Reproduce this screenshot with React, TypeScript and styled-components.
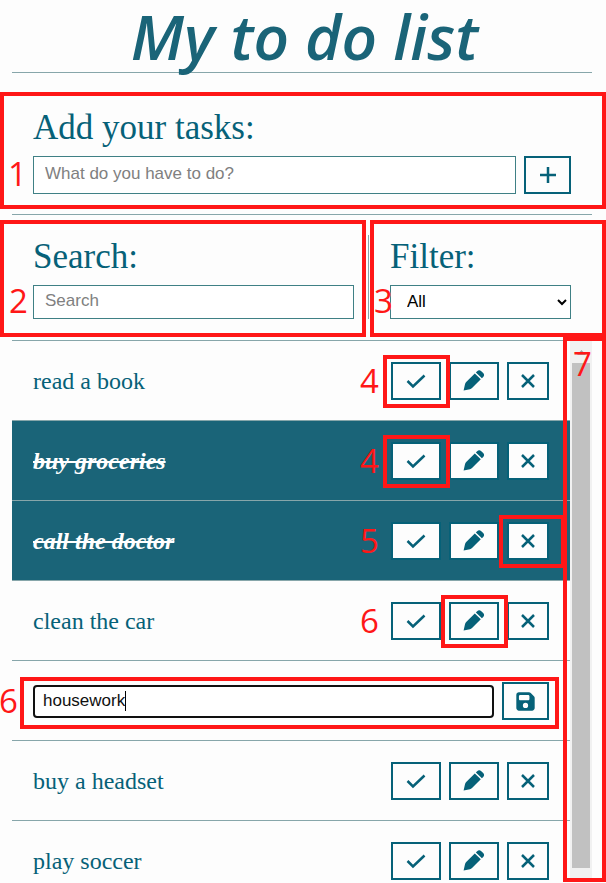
import React, { useState } from "react";
import styled, { createGlobalStyle, css } from "styled-components";
import { FaFloppyDisk } from "react-icons/fa6";

const teal = "#066178";
const fill = "#1a6478";
const line = "#87a6aa";
const paper = "#fdfdfd";
const red = "#ff1717";
const sans = `"Liberation Sans", Arial, sans-serif`;

const GlobalStyle = createGlobalStyle`
  *, *::before, *::after { box-sizing: border-box; }
  html, body { margin: 0; background: ${paper}; }
  body { font-family: "Liberation Serif", Lora, serif; color: ${teal}; }
  button, input, select { font-family: ${sans}; font-size: 17px; }
`;

const Page = styled.main`
  display: flex;
  flex-direction: column;
  height: 100vh;
  padding: 0 14px 0 12px;
  overflow: hidden;
`;

const Header = styled.header`
  flex: none;
  height: 73px;
  border-bottom: 1px solid ${line};
`;

const Title = styled.h1`
  margin: 0;
  padding: 0 0 0 5px;
  font: italic 600 62px/72px "Open Sans", "Noto Sans", sans-serif;
  text-align: center;
  color: ${fill};
`;

const AddForm = styled.form`
  position: relative;
  flex: none;
  padding: 33px 21px 20px;
  border-bottom: 1px solid ${line};
`;

const Tools = styled.section`
  display: grid;
  grid-template-columns: 1fr 203px;
  flex: none;
  gap: 14px;
  padding: 20px 21px 21px;
  border-bottom: 1px solid ${line};
`;

const Tool = styled.div<{ $divided?: boolean }>`
  position: relative;
  min-width: 0;
  ${(p) => p.$divided && css`
    padding-left: 21px;
    border-left: 1px solid ${line};
  `}
`;

const Heading = styled.label`
  display: block;
  margin-bottom: 6px;
  font-size: 35px;
  line-height: 44px;
  color: ${teal};
`;

const Line = styled.div`
  display: flex;
  align-items: center;
  gap: 8px;
`;

const TextBox = styled.input<{ $tall?: boolean }>`
  display: block;
  width: 100%;
  min-width: 0;
  height: ${(p) => (p.$tall ? 38 : 34)}px;
  padding: 0 11px 2px;
  border: 1px solid #3f8085;
  background: #fff;
  outline: none;
  &::placeholder { color: #808080; opacity: 1; }
`;

const Select = styled.select`
  display: block;
  width: 100%;
  height: 34px;
  padding: 0 0 2px 12px;
  border: 1px solid #3f8085;
  border-radius: 0;
  background: #fff;
  color: #000;
`;

const IconButton = styled.button<{ $size?: "wide" | "medium" | "narrow" }>`
  display: flex;
  flex: none;
  align-items: center;
  justify-content: center;
  width: ${(p) => ({ wide: 50, medium: 47, narrow: 42 })[p.$size ?? "wide"]}px;
  height: 38px;
  padding: 0;
  border: 2px solid ${teal};
  background: ${paper};
  color: ${teal};
  font-size: 21px;
`;

const Glyph = styled.svg`
  display: block;
  width: 22px;
  height: 22px;
  fill: none;
  stroke: currentColor;
  stroke-width: 2.5;
`;

const ListArea = styled.section`
  position: relative;
  display: grid;
  grid-template-columns: 1fr 22px;
  grid-template-rows: minmax(0, 1fr);
  flex: 1;
  min-height: 0;
  margin-bottom: 2px;
`;

const List = styled.ul`
  margin: 0;
  padding: 0;
  list-style: none;
`;

const Row = styled.li<{ $done?: boolean }>`
  position: relative;
  display: flex;
  align-items: center;
  gap: 8px;
  padding: 21px 21px 20px;
  border-bottom: 1px solid ${line};
  ${(p) => p.$done && css`background: ${fill};`}
`;

const TaskName = styled.span<{ $done?: boolean }>`
  flex: 1;
  font-size: 24px;
  line-height: 38px;
  ${(p) => p.$done && css`
    color: #fff;
    font-style: italic;
    font-weight: 700;
    text-decoration: line-through;
  `}
`;

const EditField = styled.div`
  position: relative;
  flex: 1;
`;

const EditBox = styled(TextBox)`
  height: 33px;
  padding: 0 8px;
  border: 2px solid #101010;
  border-radius: 4px;
  color: #101010;
`;

const Caret = styled.span`
  position: absolute;
  top: 6px;
  left: 92px;
  width: 1px;
  height: 20px;
  background: #000;
`;

const ScrollTrack = styled.div`
  display: flex;
  flex-direction: column;
  align-items: center;
  min-height: 0;
  padding-bottom: 13px;
  background: #f1f1f1;
`;

const ScrollArrow = styled.svg`
  flex: none;
  width: 17px;
  height: 22px;
`;

const ScrollThumb = styled.div`
  flex: 1;
  width: 18px;
  background: #c1c1c1;
`;

const Frame = styled.div<{ $inset: string }>`
  position: absolute;
  z-index: 2;
  inset: ${(p) => p.$inset};
  border: 4px solid ${red};
  pointer-events: none;
`;

const ButtonSlot = styled.div`
  position: relative;
  flex: none;
`;

const Mark = styled.span<{ $left: number; $top: number }>`
  position: absolute;
  z-index: 3;
  left: ${(p) => p.$left}px;
  top: ${(p) => p.$top}px;
  color: ${red};
  font: 400 33px/38px "Open Sans", sans-serif;
  pointer-events: none;
`;

const CheckIcon = () => (
  <Glyph viewBox="0 0 22 22"><path d="M2.500 11L8 16.500L19.500 5.500" /></Glyph>
);

const CrossIcon = () => (
  <Glyph viewBox="0 0 22 22"><path d="M5 5L17 17M17 5L5 17" /></Glyph>
);

const PlusIcon = () => (
  <Glyph viewBox="0 0 22 22"><path d="M11 3V19M3 11H19" /></Glyph>
);

const PencilIcon = () => (
  <Glyph viewBox="0 0 22 22">
    <path
      fill="currentColor"
      stroke="none"
      d="M.6 20.600L2 14.200Q2.300 13 3.200 12.100L11.800 3.500L17.800 9.300L9 18Q8.100 18.900 6.900 19.300ZM12.900 2.400L14.100 1.200Q16.200-.6 18.300 1.200L20.200 3.100Q22 5.100 20.200 7L18.900 8.200Z"
    />
  </Glyph>
);

type Action = "check" | "edit" | "remove";
type Task = {
  name: string;
  done?: boolean;
  editing?: boolean;
  framed?: Action;
  mark?: string;
};

const tasks: Task[] = [
  { name: "read a book", framed: "check", mark: "4" },
  { name: "buy groceries", done: true, framed: "check", mark: "4" },
  { name: "call the doctor", done: true, framed: "remove", mark: "5" },
  { name: "clean the car", framed: "edit", mark: "6" },
  { name: "housework", editing: true, mark: "6" },
  { name: "buy a headset" },
  { name: "play soccer" },
];

const actions = [
  { id: "check", label: "Complete", Icon: CheckIcon, size: "wide" },
  { id: "edit", label: "Edit", Icon: PencilIcon, size: "wide" },
  { id: "remove", label: "Delete", Icon: CrossIcon, size: "narrow" },
] as const;

function TaskRow({ task }: { task: Task }) {
  const [name, setName] = useState(task.name);
  if (task.editing) {
    return (
      <Row>
        <EditField>
          <EditBox aria-label="Edit task" value={name} onChange={(e) => setName(e.target.value)} />
          <Caret aria-hidden="true" />
        </EditField>
        <IconButton type="button" $size="medium" aria-label="Save"><FaFloppyDisk /></IconButton>
        <Frame $inset="16px 11px 11px 8px" />
        <Mark $left={-13} $top={21}>{task.mark}</Mark>
      </Row>
    );
  }
  return (
    <Row $done={task.done}>
      <TaskName $done={task.done}>{task.name}</TaskName>
      {actions.map(({ id, label, Icon, size }) => (
        <ButtonSlot key={id}>
          <IconButton type="button" $size={size} aria-label={`${label} ${task.name}`}><Icon /></IconButton>
          {task.framed === id && <Frame $inset={id === "remove" ? "-7px -16px -8px -8px" : "-7px -9px -8px -8px"} />}
          {id === "check" && task.mark && <Mark $left={-31} $top={0}>{task.mark}</Mark>}
        </ButtonSlot>
      ))}
    </Row>
  );
}

export default function App() {
  const [draft, setDraft] = useState("");
  const [query, setQuery] = useState("");
  return (
    <>
      <GlobalStyle />
      <Page>
        <Header><Title>My to do list</Title></Header>
        <AddForm onSubmit={(e) => e.preventDefault()}>
          <Heading htmlFor="new-task">Add your tasks:</Heading>
          <Line>
            <TextBox id="new-task" $tall placeholder="What do you have to do?" value={draft} onChange={(e) => setDraft(e.target.value)} />
            <IconButton type="submit" $size="medium" aria-label="Add task"><PlusIcon /></IconButton>
          </Line>
          <Frame $inset="19px -14px 5px -12px" />
          <Mark $left={-4} $top={82}>1</Mark>
        </AddForm>
        <Tools>
          <Tool>
            <Heading htmlFor="search">Search:</Heading>
            <TextBox id="search" placeholder="Search" value={query} onChange={(e) => setQuery(e.target.value)} />
            <Frame $inset="-15px -12px -18px -33px" />
            <Mark $left={-24} $top={47}>2</Mark>
          </Tool>
          <Tool $divided>
            <Heading htmlFor="filter">Filter:</Heading>
            <Select id="filter" defaultValue="All">
              <option>All</option>
              <option>Done</option>
              <option>To do</option>
            </Select>
            <Frame $inset="-15px -35px -18px 1px" />
            <Mark $left={5} $top={47}>3</Mark>
          </Tool>
        </Tools>
        <ListArea>
          <List>
            {tasks.map((task) => <TaskRow key={task.name} task={task} />)}
          </List>
          <ScrollTrack aria-hidden="true">
            <ScrollArrow viewBox="0 0 17 22"><path d="M4 14l4.500-5 4.500 5z" fill="#a3a3a3" /></ScrollArrow>
            <ScrollThumb />
          </ScrollTrack>
          <Frame $inset="-4px -14px -1px 551px" />
          <Mark $left={561} $top={4}>7</Mark>
        </ListArea>
      </Page>
    </>
  );
}
